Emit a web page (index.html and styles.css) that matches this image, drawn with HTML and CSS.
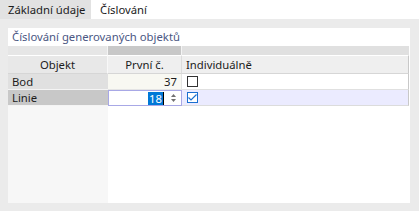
FILE: index.html
```html
<!DOCTYPE html>
<html lang="cs">
  <head>
    <meta charset="UTF-8" />
    <title>Číslování</title>
    <link rel="stylesheet" href="styles.css">
  </head>
  <body>
    <div class="tabs">
      <div class="tab">Základní údaje</div>
      <div class="tab active">Číslování</div>
    </div>

    <div class="panel">
      <div class="box">
        <div class="box-title">Číslování generovaných objektů</div>

        <div class="grid">
          <!-- horní pás -->
          <div class="band band-1"></div>
          <div class="band band-2"></div>
          <div class="band band-3"></div>

          <!-- hlavička -->
          <div class="head head-name">Objekt</div>
          <div class="head head-num">První č.</div>
          <div class="head head-ind">Individuálně</div>

          <!-- řádek Bod -->
          <div class="name">Bod</div>
          <div class="num">37</div>
          <div class="ind"><span class="check"></span></div>

          <!-- řádek Linie -->
          <div class="name selected">Linie</div>
          <div class="num editing">
            <span class="value"><span class="sel">18</span><span class="caret"></span></span>
            <svg class="spin" width="7" height="10" viewBox="0 0 7 10">
              <path d="M3.5 1 L6 4 L1 4 Z" fill="#707070" />
              <path d="M3.5 9 L6 6 L1 6 Z" fill="#707070" />
            </svg>
          </div>
          <div class="ind selected-row">
            <span class="check checked">
              <svg width="11" height="11" viewBox="0 0 11 11">
                <path d="M1.5 5.5 L4 8 L9.5 2.5" fill="none" stroke="#1a6fd0" stroke-width="1.2" />
              </svg>
            </span>
          </div>

          <!-- zbytek -->
          <div class="fill fill-name"></div>
          <div class="fill fill-rest"></div>
        </div>
      </div>
    </div>
  </body>
</html>
```

FILE: styles.css
```css
* {
  margin: 0;
  padding: 0;
  box-sizing: border-box;
}

body {
  width: 419px;
  height: 211px;
  overflow: hidden;
  background: #ebebeb;
  font-family: "Noto Sans", "Open Sans", Arial, sans-serif;
  font-size: 11.3px;
  color: #1c1c1c;
}

.tabs {
  display: flex;
  height: 19px;
  background: #ffffff;
}

.tab {
  padding: 0 0 0 8px;
  line-height: 19px;
  background: #e2e2e2;
  width: 91px;
  white-space: nowrap;
}

.tab.active {
  background: #ffffff;
  width: 63px;
  padding-left: 9px;
}

.panel {
  height: 192px;
  padding: 9px 9px 8px 8px;
}

.box {
  height: 100%;
  background: #ffffff;
  display: flex;
  flex-direction: column;
}

.box-title {
  height: 18px;
  line-height: 17px;
  padding-left: 4px;
  color: #4b5783;
  white-space: nowrap;
}

.grid {
  flex: 1;
  display: grid;
  grid-template-columns: 100px 74px 1fr;
  grid-template-rows: 9px 19px 16px 16px 1fr;
  margin-right: 1px;
}

.band-1 {
  background: #e6e6e6;
  border-right: 1px solid #f4f4f4;
}

.band-2 {
  background: #c8c8c8;
  border-right: 1px solid #f4f4f4;
}

.band-3 {
  background: #e0e0e0;
}

.head {
  background: #efefef;
  line-height: 18px;
  border-top: 1px solid #ffffff;
  border-bottom: 1px solid #d6d6d6;
}

.head-name {
  background: #e8e8e8;
  text-align: center;
  border-right: 1px solid #f8f8f8;
}

.head-num {
  text-align: center;
  border-right: 1px solid #dcdcdc;
}

.head-ind {
  padding-left: 4px;
  border-right: 1px solid #c8c8c8;
}

.name {
  background: #e0e0e0;
  padding-left: 4px;
  line-height: 15px;
  border-bottom: 1px solid #f4f4f4;
}

.name.selected {
  background: #c8c8c8;
}

.num {
  background: #f8f8f2;
  text-align: right;
  padding-right: 4px;
  line-height: 15px;
  border-bottom: 1px solid #e4e4e4;
  border-right: 1px solid #e4e4e4;
}

.num.editing {
  background: #ffffff;
  border: 1px solid #a8a8e6;
  display: flex;
  align-items: center;
  justify-content: flex-end;
  gap: 6px;
  padding-right: 4px;
}

.value {
  display: flex;
  align-items: center;
}

.sel {
  background: #0078d7;
  color: #ffffff;
  line-height: 13px;
  padding: 0 1px;
}

.caret {
  width: 1px;
  height: 13px;
  background: #000000;
}

.ind {
  padding-left: 5px;
  display: flex;
  align-items: center;
  border-bottom: 1px solid #e0e0e0;
  border-right: 1px solid #c8c8c8;
}

.ind.selected-row {
  background: #ebebff;
  border-bottom: 1px solid #dcdcdc;
}

.check {
  display: block;
  width: 11px;
  height: 11px;
  border: 1px solid #333333;
  background: #ffffff;
}

.check.checked {
  border-color: #1a6fd0;
  position: relative;
}

.check.checked svg {
  position: absolute;
  left: -1px;
  top: -1px;
}

.fill-name {
  background: #f7f7f7;
}

.fill-rest {
  grid-column: 2 / -1;
  background: #ffffff;
}
```
